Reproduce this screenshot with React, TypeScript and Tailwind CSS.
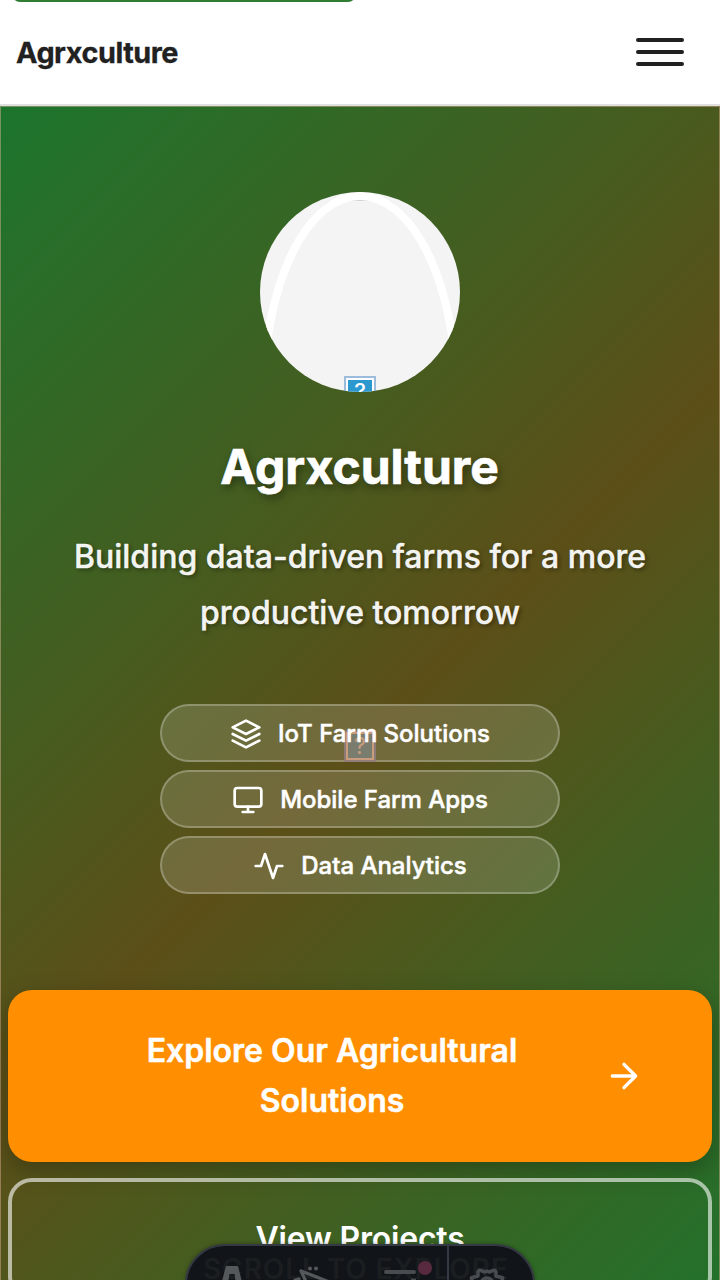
import React from "react";

const icon = "size-8 shrink-0";

function Layers() {
  return (
    <svg className={icon} viewBox="0 0 24 24" fill="none" stroke="currentColor" strokeWidth="2" strokeLinecap="round" strokeLinejoin="round">
      <polygon points="12 2 2 7 12 12 22 7 12 2" />
      <polyline points="2 17 12 22 22 17" />
      <polyline points="2 12 12 17 22 12" />
    </svg>
  );
}

function Monitor() {
  return (
    <svg className={icon} viewBox="0 0 24 24" fill="none" stroke="currentColor" strokeWidth="2" strokeLinecap="round" strokeLinejoin="round">
      <rect x="2" y="3" width="20" height="14" rx="2" />
      <path d="M8 21h8M12 17v4" />
    </svg>
  );
}

function Activity() {
  return (
    <svg className={icon} viewBox="0 0 24 24" fill="none" stroke="currentColor" strokeWidth="2" strokeLinecap="round" strokeLinejoin="round">
      <polyline points="22 12 18 12 15 21 9 3 6 12 2 12" />
    </svg>
  );
}

const features = [
  { label: "IoT Farm Solutions", Icon: Layers },
  { label: "Mobile Farm Apps", Icon: Monitor },
  { label: "Data Analytics", Icon: Activity },
];

function Header() {
  return (
    <header className="relative flex h-[106px] shrink-0 items-center justify-between border-b-2 border-[#e0e0e0] bg-white pr-9 pl-4">
      <a className="absolute -top-[70px] left-3 h-[72px] w-[344px] rounded-lg bg-[#2e7d32]" aria-label="Skip" />
      <span className="pt-0.5 text-[28.8px] leading-none font-bold tracking-[-0.46px] text-[#212121] [-webkit-text-stroke:0.3px_#212121]">Agrxculture</span>
      <button className="flex w-12 flex-col gap-2" aria-label="Menu">
        <span className="h-1 rounded-full bg-[#212121]" />
        <span className="h-1 rounded-full bg-[#212121]" />
        <span className="h-1 rounded-full bg-[#212121]" />
      </button>
    </header>
  );
}

function Emblem() {
  return (
    <div className="relative size-[200px] overflow-hidden rounded-full bg-[#f4f4f4]">
      <svg className="block size-full" viewBox="0 0 200 200" fill="none">
        <ellipse cx="100" cy="200" rx="96" ry="196" stroke="#fff" strokeWidth="8" />
        <path d="M91 8.8Q100 7.5 109 8.8Z" fill="#a5a8a5" />
      </svg>
      <div className="absolute top-[184px] left-[84px] flex size-8 items-start justify-center border-2 border-[#9dbbdc] bg-[#2c98d0] text-[22px] leading-[27px] font-medium text-white inset-ring-2 inset-ring-white">
        ?
      </div>
    </div>
  );
}

function Dock() {
  return (
    <div className="absolute top-[1244px] left-[185px] h-20 w-[350px] overflow-hidden rounded-[40px] border-2 border-[#343943] bg-[#111418] shadow-[0_0_4px_#0005]">
      <div className="absolute top-[7px] left-4 text-[28px] leading-[32px] font-semibold tracking-[0.9px] whitespace-nowrap text-[#1b1e21]">SCROLL TO EXPLORE</div>
      <svg className="absolute inset-0" width="346" height="76" viewBox="187 1246 346 76" fill="none">
        <path d="M226 1266h12l8 32h-8l-3.5-24h-5l-4 24h-8z" fill="#55585b" />
        <path d="M301 1271l17 6.500l10 4M301 1271l7 15M295 1280l4-1" stroke="#55585b" strokeWidth="3.2" strokeLinecap="round" strokeLinejoin="round" />
        <circle cx="310" cy="1268.500" r="2" fill="#55585b" />
        <circle cx="316" cy="1268.500" r="2" fill="#55585b" />
        <path d="M386 1272h28" stroke="#484c50" strokeWidth="4" strokeLinecap="round" />
        <path d="M411 1280h5" stroke="#484c50" strokeWidth="3" />
        <circle cx="425" cy="1268" r="7" fill="#592a3f" />
        <path d="M448 1246v76" stroke="#343943" strokeWidth="2" />
        <path d="M472 1284v-4q-2-3 2-3l4-1v-4q1-3 4-1l3 1 2-1 2 1 3-1q3-2 4 1v4l4 1q4 0 2 3v4" stroke="#484c50" strokeWidth="3.5" strokeLinejoin="round" />
        <circle cx="487" cy="1284" r="6" stroke="#484c50" strokeWidth="3.5" />
      </svg>
    </div>
  );
}

export default function App() {
  return (
    <div className="relative flex h-[1280px] w-[720px] flex-col overflow-hidden bg-white font-['Inter',sans-serif]">
      <Header />
      <main className="relative flex h-[1280px] shrink-0 flex-col items-center bg-[linear-gradient(135deg,#1c752d_0%,#5c4f18_50%,#1c752d_100%)] px-2 pt-[86px] text-white inset-ring inset-ring-[#e8b8a070]">
        <Emblem />
        <h1 className="mt-[45px] mr-px text-[48px] leading-[60px] font-bold [-webkit-text-stroke:0.7px_#fff] [text-shadow:2px_4px_8px_#0006]">Agrxculture</h1>
        <p className="mt-8 text-center text-[32px] leading-[56px] font-medium text-white/95 [-webkit-text-stroke:0.5px_#fffc] [text-shadow:2px_2px_4px_#0006]">
          Building data-driven farms for a more
          <br />
          productive tomorrow
        </p>
        <div className="relative mt-[63px] flex w-[400px] flex-col gap-2">
          {features.map(({ label, Icon }) => (
            <div key={label} className="flex h-[58px] items-center justify-center gap-4 rounded-full border-2 border-white/25 bg-white/15 pt-0.5 text-[24px] font-medium">
              <Icon />
              <span className="relative z-10 tracking-[-0.02px] [-webkit-text-stroke:0.5px_#fff]">{label}</span>
            </div>
          ))}
          <div className="absolute top-[26px] left-[184px] flex size-8 items-center justify-center border-2 border-[#967878b0] bg-[#7c8586b0] text-[23px] leading-none text-[#c89c7c] inset-ring-2 inset-ring-[#c89c7c]">
            ?
          </div>
        </div>
        <button className="mt-24 flex h-[172px] w-full items-center rounded-3xl bg-[#ff8f00] text-[32px] leading-[50px] font-semibold shadow-[0_8px_24px_#0004]">
          <span className="ml-16 w-[520px] text-center [-webkit-text-stroke:0.5px_#fff]">
            Explore Our Agricultural
            <br />
            Solutions
          </span>
          <svg className="ml-3 size-10" viewBox="0 0 24 24" fill="none" stroke="currentColor" strokeWidth="2" strokeLinecap="round" strokeLinejoin="round">
            <path d="M5 12h14M12 5l7 7-7 7" />
          </svg>
        </button>
        <button className="mt-4 h-[122px] w-full rounded-3xl border-4 border-white/60 text-[32px] leading-[50px] font-semibold tracking-[-0.2px]">View Projects</button>
      </main>
      <Dock />
    </div>
  );
}
